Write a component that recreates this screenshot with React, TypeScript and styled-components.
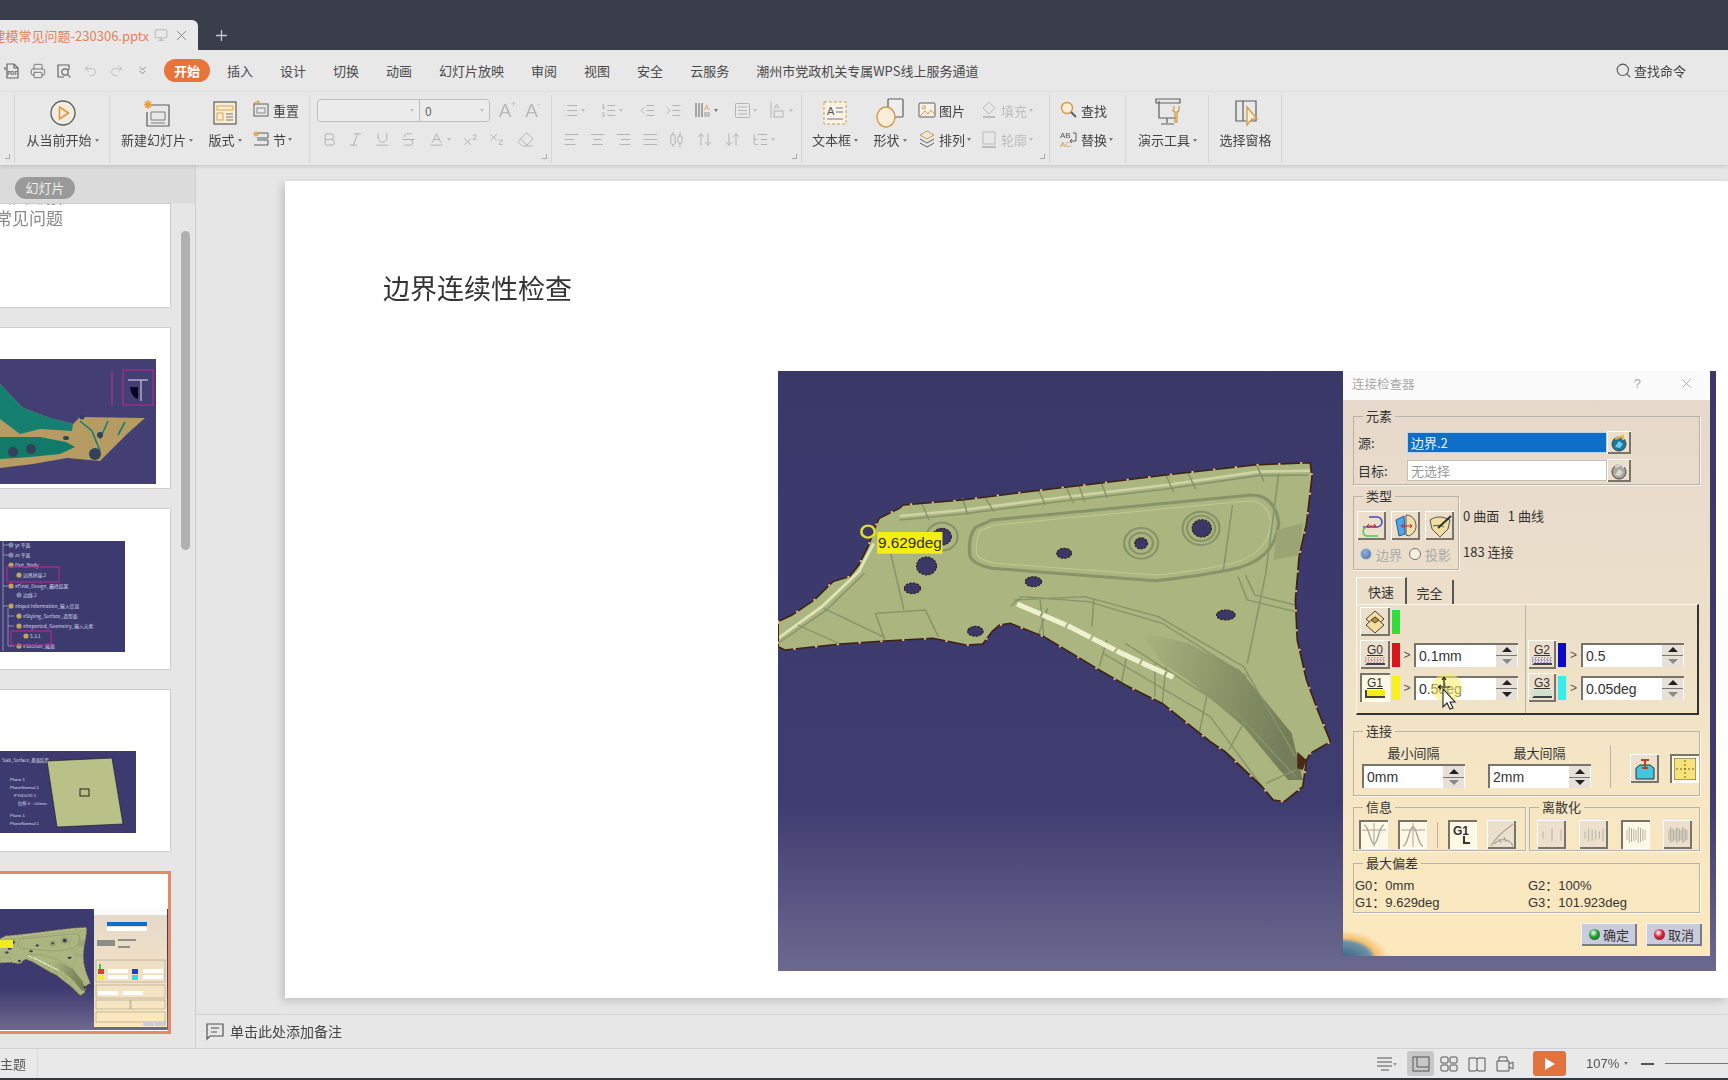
import React from 'react';
import styled, { createGlobalStyle } from 'styled-components';
import {
  Printer, Undo2, Redo2, Plus, X, Monitor, Bold, Italic, Underline, Strikethrough, Baseline,
  Superscript, Subscript, Eraser, List, ListOrdered, IndentDecrease, IndentIncrease, AlignLeft,
  AlignCenter, AlignRight, AlignJustify, AlignHorizontalDistributeCenter, ArrowUpDown,
  Search, ChevronsDown, ArrowDownUp, ListTree,
} from 'lucide-react';

const CJK = `"Noto Sans CJK SC", "Noto Sans", "Liberation Sans", sans-serif`;
const UIF = `"Liberation Sans", "Noto Sans CJK SC", sans-serif`;

const Global = createGlobalStyle`
  html, body { margin: 0; padding: 0; width: 1728px; height: 1080px; overflow: hidden; background: #e6e6e6; }
  * { box-sizing: border-box; }
`;

const Page = styled.div`
  width: 1728px; height: 1080px; display: flex; flex-direction: column; overflow: hidden;
  font-family: ${CJK}; color: #444; font-size: 13px; filter: blur(0.4px);
`;

/* ---------- title bar ---------- */
const TitleBar = styled.div`height: 50px; flex: none; background: #3a3e4b; display: flex; align-items: flex-end;`;
const DocTab = styled.div`
  width: 198px; height: 30px; background: #e9e9e9; border-radius: 0 6px 0 0; display: flex;
  align-items: center; justify-content: flex-end; gap: 5px; padding-right: 8px; overflow: hidden; flex: none;
  svg { flex: none; }
`;
const DocName = styled.span`color: #e2845a; font-size: 13px; white-space: nowrap; flex: none;`;
const NewTab = styled.div`margin-left: 15px; height: 30px; display: flex; align-items: center; color: #c8cad0;`;

/* ---------- menu ---------- */
const MenuBar = styled.div`
  height: 42px; flex: none; background: #e8e8e8; display: flex; align-items: center; border-bottom: 1px solid #e1e1e1;
`;
const QuickBar = styled.div`display: flex; margin-left: -1px;`;
const QuickBtn = styled.div<{ $dim?: boolean }>`
  width: 26px; height: 26px; display: flex; align-items: center; justify-content: center;
  color: ${p => (p.$dim ? '#b8b8b8' : '#666')};
`;
const MenuTabs = styled.div`display: flex; align-items: center; gap: 27px; margin-left: 9px;`;
const MenuItem = styled.span`font-size: 13px; color: #4a4a4a; white-space: nowrap;`;
const ActivePill = styled.span`
  width: 46px; height: 23px; border-radius: 12px; background: #e8743b; color: #fff; font-weight: 700;
  font-size: 13px; display: flex; align-items: center; justify-content: center; margin-right: -10px;
`;
const CommandSearch = styled.div`
  margin-left: auto; margin-right: 42px; display: flex; align-items: center; gap: 2px; font-size: 13px; color: #444;
`;

/* ---------- ribbon ---------- */
const Ribbon = styled.div`
  height: 73px; flex: none; background: #e8e8e8; display: flex; box-shadow: 0 2px 3px rgba(0,0,0,.10); position: relative; z-index: 2;
`;
const RibbonGroup = styled.div<{ $w: number; $launcher?: boolean }>`
  width: ${p => p.$w}px; flex: none; height: 68px; margin-top: 3px; display: flex; border-right: 1px solid #d6d6d6; position: relative;
  ${p => p.$launcher ? `&::after { content: ''; position: absolute; right: 4px; bottom: 4px; width: 4px; height: 4px; border-right: 1px solid #a8a8a8; border-bottom: 1px solid #a8a8a8; }` : ''}
`;
const BigBtn = styled.div<{ $w: number }>`
  width: ${p => p.$w}px; flex: none; display: flex; flex-direction: column; align-items: center; white-space: nowrap;
`;
const BigIcon = styled.div`height: 34px; margin-top: 1px; display: flex; align-items: center; justify-content: center;`;
const BigLabel = styled.div`height: 18px; line-height: 18px; margin-top: 1px; display: flex; align-items: center; gap: 3px; font-size: 13px; color: #444;`;
const Caret = styled.i<{ $dim?: boolean }>`
  display: inline-block; width: 0; height: 0; border-left: 2.5px solid transparent; border-right: 2.5px solid transparent;
  border-top: 3px solid ${p => (p.$dim ? '#c0c0c0' : '#777')}; flex: none;
`;
const SmallCol = styled.div<{ $ml?: number }>`
  display: flex; flex-direction: column; gap: 5px; padding-top: 3px; margin-left: ${p => p.$ml ?? 0}px;
`;
const SmallRow = styled.div<{ $dim?: boolean; $tight?: boolean }>`
  height: 24px; display: flex; align-items: center; gap: ${p => (p.$tight ? 0 : 2)}px; font-size: 13px; white-space: nowrap;
  color: ${p => (p.$dim ? '#bdbdbd' : '#444')};
`;
const FontBox = styled.div`
  width: 173px; height: 23px; border: 1px solid #bdbdbd; border-radius: 4px; display: flex; background: #ececec; margin: 1px 0 0 7px;
`;
const FontCell = styled.div<{ $w: number; $line?: boolean }>`
  width: ${p => p.$w}px; display: flex; align-items: center; justify-content: space-between; padding: 0 5px; font-size: 12px; color: #666;
  ${p => (p.$line ? 'border-right: 1px solid #bdbdbd;' : '')}
`;
const FmtBtn = styled.div<{ $w: number; $ml?: number }>`
  width: ${p => p.$w}px; height: 24px; flex: none; display: flex; align-items: center; justify-content: center; gap: 2px;
  color: #b2b2b2; margin-left: ${p => p.$ml ?? 0}px;
`;
const Glyph = styled.span`font-size: 19px; color: #b8b8b8; font-family: ${UIF}; position: relative; line-height: 1;
  sup { font-size: 9px; position: absolute; top: -1px; left: 12px; }
`;

/* ---------- main ---------- */
const Main = styled.div`flex: 1; display: flex; min-height: 0;`;
const SidePanel = styled.div`width: 196px; flex: none; display: flex; flex-direction: column; background: #e6e6e6; border-right: 1px solid #cfcfcf;`;
const PanelHead = styled.div`height: 38px; flex: none; background: #dbdbdb; display: flex; align-items: center; padding: 7px 0 0 15px; position: relative; z-index: 1;`;
const PanelPill = styled.span`
  width: 60px; height: 22px; border-radius: 11px; background: #9a9a9a; color: #eee; font-size: 13px;
  display: flex; align-items: center; justify-content: center;
`;
const PanelBody = styled.div`flex: 1; display: flex; min-height: 0; overflow: hidden;`;
const ThumbList = styled.div`width: 171px; flex: none; display: flex; flex-direction: column; gap: 19px;`;
const ThumbCard = styled.div<{ $h: number; $pt?: number; $on?: boolean }>`
  height: ${p => p.$h}px; flex: none; background: #fff; padding-top: ${p => p.$pt ?? 0}px; overflow: hidden;
  border: ${p => (p.$on ? '3px solid #e58a62' : '1px solid #cdcdcd')}; border-left: 0;
`;
const ThumbText = styled.div`
  font-size: 17px; color: #8a8a8a; line-height: 22px; white-space: nowrap; direction: rtl; width: 63px; margin-top: -19px;
`;
const ScrollTrack = styled.div`width: 24px; flex: none; padding: 28px 0 0 10px;`;
const ScrollThumb = styled.div`width: 9px; height: 319px; border-radius: 5px; background: #b0b0b0;`;

const Work = styled.div`flex: 1; min-width: 0; display: flex; flex-direction: column;`;
const Stage = styled.div`flex: 1; min-height: 0; padding: 16px 0 0 89px; overflow: hidden; background: #e6e6e6;`;
const Slide = styled.div`
  height: 817px; background: #fff; box-shadow: -3px 3px 8px rgba(0,0,0,.16); display: flex; flex-direction: column; align-items: flex-start;
`;
const SlideTitle = styled.h1`
  margin: 80px 0 56px 98px; height: 54px; line-height: 54px; font-size: 27px; font-weight: 400; color: #333; white-space: nowrap;
`;
const Viewport = styled.div`
  width: 938px; height: 600px; margin-left: 493px; flex: none; display: flex; align-items: flex-start;
  background: linear-gradient(#3a3769 0%, #3f3c70 72%, #6c6990 100%);
`;
const CadSvg = styled.svg`width: 565px; height: 600px; flex: none; display: block;`;

const Notes = styled.div`
  height: 34px; flex: none; border-top: 1px solid #d2d2d2; background: #e7e7e7; display: flex; align-items: center; gap: 5px; padding: 0 0 2px 9px; font-size: 14px; color: #444;
`;
const StatusBar = styled.div`
  height: 32px; flex: none; background: #e9e9e9; border-top: 1px solid #cfcfcf; border-bottom: 2px solid #2f3644; display: flex; align-items: center;
`;
const ThemeLabel = styled.span`width: 38px; height: 100%; border-right: 1px solid #dadada; font-size: 13px; color: #555; display: flex; align-items: center;`;
const StatusTools = styled.div`margin-left: auto; display: flex; align-items: center; height: 100%;`;
const StatusBtn = styled.div<{ $on?: boolean; $mr?: number }>`
  width: 27px; height: 25px; display: flex; align-items: center; justify-content: center; border-radius: 3px; margin-right: ${p => p.$mr ?? 1}px;
  background: ${p => (p.$on ? '#c8c8c8' : 'transparent')}; color: #666;
`;
const PlayBtn = styled.div`
  width: 33px; height: 25px; margin-left: 14px; border-radius: 3px; background: #e2733d; display: flex; align-items: center; justify-content: center;
`;
const Zoom = styled.span`margin-left: 20px; font-size: 13px; color: #555; display: flex; align-items: center; gap: 5px; width: 55px; font-family: ${UIF};`;
const ZoomMinus = styled.i`width: 13px; height: 2px; background: #555;`;
const ZoomLine = styled.i`width: 63px; height: 1px; background: #777; margin-left: 11px;`;

/* ---------- CATIA dialog ---------- */
const Dialog = styled.div`width: 367px; height: 585px; flex: none; display: flex; flex-direction: column; font-family: ${UIF}; color: #333;`;
const DialogHead = styled.div`
  height: 29px; flex: none; background: #fbfbfb; display: flex; align-items: center; padding: 0 16px 5px 9px; color: #a9a9a9; font-family: ${CJK}; font-size: 12.5px;
`;
const HeadHelp = styled.span`margin-left: auto; margin-right: 38px; font-family: ${UIF}; font-size: 13px;`;
const DialogBody = styled.div`
  flex: 1; position: relative; padding: 7px 10px 0; overflow: hidden;
  background: linear-gradient(#e6d9cb 0%, #ecdfca 40%, #f4e5c6 62%, #fbe8bd 100%);
`;
const Group = styled.fieldset<{ $w?: number; $pt?: number; $mt?: number }>`
  margin: ${p => p.$mt ?? 0}px 0 0; min-width: 0; padding: ${p => p.$pt ?? 6}px 0 0 0; border: 1px solid #b8b3a8; box-shadow: 1px 1px 0 rgba(255,255,255,.7);
  ${p => (p.$w ? `width: ${p.$w}px; flex: none;` : '')}
`;
const Legend = styled.legend`
  margin-left: 9px; padding: 0 3px; height: 18px; line-height: 18px; font-family: ${CJK}; font-size: 13px; color: #333;
`;
const FormRow = styled.div`display: grid; grid-template-columns: 49px 200px 24px; align-items: center; height: 23px; margin: 0 0 5px 4px;
  &:last-child { margin-bottom: 2px; }
`;
const FormLabel = styled.span`font-family: ${CJK}; font-size: 13px; color: #333;`;
const TextField = styled.div<{ $sel?: boolean }>`
  height: 21px; display: flex; align-items: center; padding-left: 3px; font-family: ${CJK}; font-size: 13px;
  background: ${p => (p.$sel ? '#0f6fc8' : '#fff')}; color: ${p => (p.$sel ? '#e8f2ff' : '#9a9a9a')};
  border: 1px solid ${p => (p.$sel ? '#bcd4ea' : '#c4c0b8')};
`;
const Bevel = styled.div<{ $w?: number; $h?: number; $on?: boolean }>`
  width: ${p => p.$w ?? 29}px; height: ${p => p.$h ?? 29}px; flex: none; display: flex; align-items: center; justify-content: center;
  background: ${p => (p.$on ? '#fff8e4' : '#ece0cc')};
  box-shadow: ${p => (p.$on
    ? 'inset 2px 2px 0 #77746c, inset -1px -1px 0 #fff'
    : 'inset 1px 1px 0 #fff, inset -2px -2px 0 #77746c')};
`;
const TypeBlock = styled.div`display: flex; margin-top: 2px; gap: 4px;`;
const TypeButtons = styled.div`display: flex; gap: 5px; padding-left: 3px;`;
const RadioRow = styled.div`display: flex; align-items: center; height: 16px; margin: 6px 0 7px 3px; gap: 4px; font-family: ${CJK}; font-size: 13px; color: #aaa;`;
const Radio = styled.i<{ $on?: boolean }>`
  width: 12px; height: 12px; border-radius: 50%; flex: none;
  background: ${p => (p.$on ? 'radial-gradient(circle at 40% 35%, #8fb0d8, #4d6d9c)' : '#f7efe2')};
  border: 1px solid ${p => (p.$on ? '#c5cdd8' : '#777')}; margin-left: 3px;
`;
const SideInfo = styled.div`display: flex; flex-direction: column; gap: 20px; padding-top: 21px; font-family: ${CJK}; font-size: 13px; line-height: 16px; color: #333; white-space: pre;`;
const Tabs = styled.div`display: flex; margin: 7px 0 0 3px; height: 27px; font-family: ${CJK}; font-size: 13px;`;
const TabHead = styled.div<{ $on?: boolean; $w: number }>`
  width: ${p => p.$w}px; display: flex; align-items: center; justify-content: center;
  border-right: 2px solid #555;
  ${p => (p.$on ? 'border-top: 1px solid #fff; border-left: 1px solid #fff; background: #ecdfca;' : 'margin-top: 3px;')}
`;
const TabPanel = styled.div`
  width: 343px; height: 111px; margin-left: 3px; display: grid; grid-template-columns: 169px 1fr;
  border-top: 1px solid #fbf5ea; border-left: 1px solid #fbf5ea; border-right: 2px solid #333; border-bottom: 2px solid #333;
`;
const TabCol = styled.div<{ $pl: number; $split?: boolean }>`
  display: flex; flex-direction: column; gap: 4px; padding: 2px 0 0 ${p => p.$pl}px;
  ${p => (p.$split ? 'border-right: 1px solid #b8b3a8;' : '')}
`;
const LevelRow = styled.div`display: flex; align-items: center; height: 29px;`;
const ColorBar = styled.i<{ $c: string }>`width: 8px; height: 24px; margin-left: 2px; background: ${p => p.$c}; flex: none;`;
const Gt = styled.span<{ $w: number }>`width: ${p => p.$w}px; text-align: center; font-size: 12px; color: #555; flex: none;`;
const Spin = styled.div<{ $w: number }>`
  width: ${p => p.$w}px; height: 24px; flex: none; display: flex; background: #fff; padding-left: 2px; align-items: center;
  border-left: 2px solid #77746c; border-top: 2px solid #77746c; font-size: 14px; color: #333; position: relative;
`;
const SpinText = styled.span`flex: 1; padding-left: 1px; white-space: nowrap;`;
const SpinBtns = styled.div`width: 21px; height: 22px; flex: none; display: flex; flex-direction: column; margin-right: 1px; gap: 1px; background: #777;`;
const SpinBtn = styled.div<{ $down?: boolean; $dim?: boolean }>`
  flex: 1; background: #e6e0d6; display: flex; align-items: center; justify-content: center;
  &::after { content: ''; width: 0; height: 0; border-left: 5px solid transparent; border-right: 5px solid transparent;
    ${p => (p.$down ? 'border-top' : 'border-bottom')}: 5px solid ${p => (p.$dim ? '#8a8a8a' : '#222')}; }
`;
const CursorSpot = styled.svg`position: absolute; left: 15px; top: -3px; width: 34px; height: 34px; overflow: visible;`;
const GBtnInner = styled.div`display: flex; flex-direction: column; align-items: center; font-size: 12px; line-height: 12px; width: 22px; color: #333;`;
const GText = styled.span`text-decoration: underline;`;
const GSwatch = styled.i<{ $bg: string; $edge?: boolean }>`
  width: 20px; height: 8px; margin-top: 1px; background: ${p => p.$bg}; border-bottom: 2px solid #444; border-left: 2px solid ${p => (p.$edge ? '#444' : 'transparent')};
`;
const ConnectRow = styled.div`display: flex; align-items: flex-end; padding: 0 0 7px 8px;`;
const StackedField = styled.div<{ $ml?: number }>`display: flex; flex-direction: column; align-items: center; gap: 3px; margin-left: ${p => p.$ml ?? 0}px;`;
const StackedLabel = styled.span`font-family: ${CJK}; font-size: 13px; line-height: 16px; color: #333;`;
const VLine = styled.i<{ $h: number; $mx: number }>`
  width: 1px; height: ${p => p.$h}px; background: #b8b3a8; margin: 0 ${p => p.$mx}px; flex: none;
`;
const ConnectTools = styled.div`display: flex; gap: 11px; padding-bottom: 5px;`;
const GroupsRow = styled.div`display: flex; gap: 3px; margin-top: 2px;`;
const ToolRow = styled.div<{ $pl: number; $gap: number }>`display: flex; align-items: center; gap: ${p => p.$gap}px; padding: 0 0 1px ${p => p.$pl}px;`;
const ReadGrid = styled.div`display: grid; grid-template-columns: 173px 1fr; padding: 0 0 1px 1px; font-size: 13px; line-height: 17px; color: #333;
  span { white-space: pre; font-family: ${UIF}, ${CJK}; }
`;
const DialogFoot = styled.div`display: flex; justify-content: flex-end; gap: 9px; margin: 10px -2px 0 0; position: relative; z-index: 1;`;
const FootBtn = styled.div`
  width: 56px; height: 23px; display: flex; align-items: center; justify-content: center; gap: 3px; background: #cacbdc;
  box-shadow: inset 1px 1px 0 #f4f4f8, inset -2px -2px 0 #7a7a8c; font-family: ${CJK}; font-size: 13px; color: #333;
`;
const Dot = styled.i<{ $c: string }>`width: 11px; height: 11px; border-radius: 50%; background: radial-gradient(circle at 40% 35%, #fff 0, ${p => p.$c} 45%, #333 130%);`;
const Globe = styled.div`
  position: absolute; left: 0; bottom: 0; width: 50px; height: 30px;
  background: radial-gradient(ellipse 46px 30px at 0 115%, #2f5a7c 0, #6d93a8 62%, #f3c070 74%, rgba(250,220,160,0) 100%);
`;

/* ---------- drawings ---------- */
const OUTLINE = '22,545 60,525 120,480 170,425 215,410 240,375 265,320 285,260 295,235 350,205 360,195 520,180 720,152 890,130 1070,105 1310,75 1460,68 1465,110 1450,250 1430,350 1420,480 1425,600 1450,720 1480,810 1515,905 1460,940 1450,960 1440,1040 1390,1085 1360,1080 1330,1040 1230,935 1190,905 1060,790 960,735 890,690 740,590 650,550 620,555 600,575 575,612 530,615 440,595 310,603 190,612 40,630 22,620';
const HOLE = '#3b3868';
const EDGE = '#87946a';

const Ribs = () => (
  <g stroke={EDGE} strokeWidth="4" fill="none">
    {[[410, 190, 430, 240], [520, 175, 535, 225], [580, 170, 605, 215], [725, 150, 745, 195], [800, 140, 820, 190], [835, 138, 850, 185], [895, 128, 912, 175], [1070, 105, 1090, 155], [1130, 98, 1150, 148], [1315, 75, 1335, 125]].map((l, i) => (
      <line key={i} x1={l[0]} y1={l[1]} x2={l[2]} y2={l[3]} />
    ))}
  </g>
);

const CadPart = ({ light = '#aab57f', tag = true }: { light?: string; tag?: boolean }) => (
  <g>
    <defs>
      <linearGradient id="shade" x1="0" y1="0" x2="1" y2="0.2">
        <stop offset="0" stopColor="#aab57f" />
        <stop offset="0.55" stopColor="#8b9568" />
        <stop offset="1" stopColor="#737d59" />
      </linearGradient>
    </defs>
    <polygon points={OUTLINE} fill={light} />
    <polygon points="1000,575 1130,610 1270,690 1410,880 1440,1020 1400,1020 1280,860 1130,720 1060,670" fill="url(#shade)" />
    {/* flange along the top edge */}
    <polyline points="350,228 520,210 730,180 1070,135 1320,95 1458,92" fill="none" stroke="#cfd4a6" strokeWidth="8" />
    <polyline points="350,240 520,222 730,192 1070,147 1320,107 1455,105" fill="none" stroke={EDGE} strokeWidth="5" />
    <polyline points="22,595 140,500 240,395 280,310" fill="none" stroke="#dfe3b8" strokeWidth="8" />
    <polyline points="22,610 150,512 255,400" fill="none" stroke={EDGE} strokeWidth="4" />
    <Ribs />
    {/* raised pocket */}
    <path d="M555,262 Q535,290 540,345 Q545,372 600,385 L1040,422 Q1120,415 1240,390 Q1365,365 1375,250 Q1365,165 1300,165 L600,240 Z" fill="none" stroke={EDGE} strokeWidth="9" />
    <path d="M570,270 Q555,295 558,340 Q565,360 610,370 L1040,405 Q1110,400 1230,375 Q1345,350 1355,250 Q1345,185 1295,182 L610,255 Z" fill="none" stroke="#c2c995" strokeWidth="3" />
    <path d="M1370,270 L1440,250 L1430,345 L1360,360 Z" fill="#9aa573" />
    <g stroke={EDGE} strokeWidth="4" fill="none">
      <polyline points="320,310 362,510" />
      <polyline points="145,505 310,592" />
      <polyline points="75,555 190,612" />
      <polyline points="285,520 420,510 455,590" />
      <polyline points="285,520 310,600" />
      <polyline points="1250,195 1225,392" />
      <polyline points="1375,100 1340,400 1290,670" />
      <polyline points="1265,410 1290,480 1420,515" />
      <polyline points="1285,405 1310,465 1420,495" />
      <polyline points="660,480 850,470 1050,530 1280,680 1420,950" />
      <polyline points="650,500 680,470 860,485 1060,550 1290,710" />
      <polyline points="730,480 740,590" />
      <polyline points="750,505 725,585" />
      <polyline points="875,480 870,560" />
      <polyline points="960,610 1270,830 1420,1010" />
      <polyline points="900,640 1190,830 1330,1040" />
      <polyline points="1040,670 1040,770" />
      <polyline points="1070,680 1060,790" />
      <polyline points="1180,770 1160,880" />
      <polyline points="1280,850 1240,930" />
      <polyline points="910,600 890,680" />
      <polyline points="965,640 950,730" />
      <polyline points="1340,1030 1420,990" />
    </g>
    <polyline points="668,492 810,560 950,640 1090,712" fill="none" stroke="#eef0d0" strokeWidth="15" strokeDasharray="70 6" />
    {/* bosses and holes */}
    <g fill="none" stroke={EDGE} strokeWidth="6">
      <circle cx="465" cy="290" r="42" />
      <circle cx="1165" cy="265" r="50" />
      <circle cx="1003" cy="310" r="46" />
      <circle cx="1003" cy="310" r="32" />
      <circle cx="1165" cy="265" r="38" />
    </g>
    <g fill={HOLE} stroke="#2b1a10" strokeWidth="3" strokeDasharray="7 3">
      <circle cx="465" cy="290" r="25" />
      <circle cx="1167" cy="265" r="26" />
      <circle cx="1003" cy="310" r="17" />
      <circle cx="423" cy="378" r="27" />
      <ellipse cx="795" cy="340" rx="20" ry="15" />
      <ellipse cx="712" cy="425" rx="22" ry="15" />
      <ellipse cx="385" cy="445" rx="22" ry="16" />
      <ellipse cx="555" cy="574" rx="21" ry="15" />
      <ellipse cx="1232" cy="525" rx="25" ry="15" />
    </g>
    <polygon points="1425,935 1450,960 1440,990 1425,985" fill="#4a2a14" />
    <polygon points={OUTLINE} fill="none" stroke="#3d2310" strokeWidth="4.5" strokeLinejoin="round" />
    <polygon points={OUTLINE} fill="none" stroke="#e8b68e" strokeWidth="6" strokeDasharray="1 58" strokeLinecap="round" />
    {tag && (
      <g>
        <circle cx="265" cy="275" r="18" fill="none" stroke="#e3dc2e" strokeWidth="7" />
        <rect x="290" y="276" width="176" height="65" fill="#f4ee16" />
        <text x="292" y="324" fontFamily={UIF} fontSize="43" fill="#333" textLength="172" lengthAdjust="spacingAndGlyphs">9.629deg</text>
      </g>
    )}
  </g>
);

const ThumbSvg = styled.svg<{ $w: number; $h: number }>`width: ${p => p.$w}px; height: ${p => p.$h}px; display: block; flex: none;`;

const ThumbTeal = () => (
  <ThumbSvg $w={156} $h={125} viewBox="0 0 156 125">
    <rect width="156" height="125" fill="#433f74" />
    <polygon points="0,25 23,49 50,59 73,65 80,58 145,59 127,75 100,102 67,99 33,105 0,109" fill="#b69c63" />
    <polygon points="0,25 23,49 50,59 73,65 72,72 40,70 20,75 0,60" fill="#157f70" />
    <polygon points="0,78 40,78 66,83 75,88 60,95 30,98 0,100" fill="#127a68" />
    <g stroke="#17806f" strokeWidth="1.6" fill="none"><polyline points="80,62 92,72 100,92" /><polyline points="108,62 100,80" /><polyline points="125,63 118,76" /></g>
    <g fill="#33415a"><circle cx="95" cy="95" r="6" /><circle cx="100" cy="76" r="3" /><circle cx="13" cy="93" r="5" /><circle cx="31" cy="90" r="5" /><ellipse cx="66" cy="79" rx="3" ry="2" /><circle cx="82" cy="58" r="2.5" /></g>
    <rect x="123" y="11" width="30" height="35" fill="none" stroke="#a02d86" strokeWidth="1.4" />
    <line x1="112" y1="12" x2="112" y2="47" stroke="#a02d86" strokeWidth="1.5" />
    <path d="M130,28 H138 V40 Q131,38 130,28 Z" fill="#060624" />
    <path d="M128,21 H148 M141,21 V42" stroke="#dfe3ef" strokeWidth="1" fill="none" />
  </ThumbSvg>
);

const TREE: [string, number, number][] = [
  ['yz 平面', 15, 6], ['zx 平面', 15, 16], ['Part_Body', 15, 26], ['边界拼接.2', 23, 36],
  ['#Final_Design_最终结果', 15, 47], ['边线.2', 23, 56], ['#Input Information_输入信息', 15, 67],
  ['#Styling_Surface_造型面', 23, 77], ['#Imported_Geometry_输入元素', 23, 87], ['5.3.1', 30, 97], ['#Section_截面', 23, 107],
];
const ThumbTree = () => (
  <ThumbSvg $w={125} $h={111} viewBox="0 0 125 111">
    <rect width="125" height="111" fill="#3d3a6f" />
    <path d="M3,0 V110 M3,4 H10 M3,14 H10 M3,45 H8 M3,65 H8 M8,67 V105 M8,75 H14 M8,85 H14 M8,105 H14" stroke="#c8cbe0" strokeWidth=".6" fill="none" />
    {TREE.map(([t, x, y]) => <text key={t} x={x} y={y} fontSize="4.8" fill="#d8dbec" fontFamily={CJK}>{t}</text>)}
    {TREE.map(([t, x, y]) => <circle key={`${t}d`} cx={x - 4} cy={y - 2} r="2.6" fill={y === 16 || y === 6 || y === 56 ? '#7f88a6' : '#c2a55c'} />)}
    <rect x="7" y="26" width="52" height="15" fill="none" stroke="#b02a8a" strokeWidth="1.2" />
    <rect x="11" y="90" width="40" height="14" fill="none" stroke="#b02a8a" strokeWidth="1.2" />
  </ThumbSvg>
);

const ThumbSlab = () => (
  <ThumbSvg $w={136} $h={82} viewBox="0 0 136 82">
    <rect width="136" height="82" fill="#3d3a6f" />
    {['Plane.1', 'PlaneNormal.1', 'FY0D070.1', 'Plane.1', 'PlaneNormal.1'].map((t, i) => (
      <text key={i} x={i === 2 ? 14 : 10} y={i < 3 ? 30 + i * 8 : 66 + (i - 3) * 8} fontSize="4.4" fill="#d8dbec" fontFamily={UIF}>{t}</text>
    ))}
    <text x="2" y="11" fontSize="4.4" fill="#d8dbec" fontFamily={CJK}>Slab_Surface_基面结果</text>
    <text x="18" y="54" fontSize="4.2" fill="#d8dbec" fontFamily={UIF}>拉伸.3 · r10mm</text>
    <polygon points="47,10 112,7 123,73 57,76" fill="#b9c188" stroke="#1d1d2c" strokeWidth=".7" />
    <rect x="80" y="38" width="9" height="7" fill="none" stroke="#222" strokeWidth="1" />
  </ThumbSvg>
);

const ThumbCurrent = () => (
  <ThumbSvg $w={168} $h={121} viewBox="0 0 168 121">
    <defs>
      <linearGradient id="tbg" x1="0" y1="0" x2="0" y2="1"><stop offset=".65" stopColor="#3d3a6f" /><stop offset="1" stopColor="#6c6990" /></linearGradient>
      <linearGradient id="dbg" x1="0" y1="0" x2="0" y2="1"><stop offset="0" stopColor="#e6d9cb" /><stop offset="1" stopColor="#fbe8bd" /></linearGradient>
    </defs>
    <rect width="168" height="121" fill="url(#tbg)" />
    <g transform="translate(-21.6,13.8) scale(.074,.0667)"><CadPart tag={false} /></g>
    <rect x="0" y="31" width="13" height="8" fill="#f0ea20" />
    <rect x="94" y="0" width="73" height="6" fill="#fbfbfb" />
    <rect x="94" y="6" width="73" height="112" fill="url(#dbg)" />
    <rect x="107" y="13" width="40" height="4" fill="#0f6fc8" />
    <rect x="107" y="18" width="40" height="4" fill="#fff" />
    <g fill="#8d8d88"><rect x="97" y="31" width="18" height="6" /><rect x="118" y="30" width="18" height="2" /><rect x="118" y="37" width="12" height="2" /></g>
    <g>
      <rect x="99" y="55" width="2" height="5" fill="#44c447" />
      <rect x="98" y="60" width="6" height="5" fill="#c43" /><rect x="108" y="60" width="20" height="4" fill="#fff" />
      <rect x="98" y="66" width="6" height="5" fill="#ee3" /><rect x="108" y="66" width="20" height="4" fill="#fff" />
      <rect x="132" y="60" width="6" height="5" fill="#33c" /><rect x="143" y="60" width="20" height="4" fill="#fff" />
      <rect x="132" y="66" width="6" height="5" fill="#3dd" /><rect x="143" y="66" width="20" height="4" fill="#fff" />
    </g>
    <g fill="none" stroke="#8f8b80" strokeWidth=".5">
      <rect x="96" y="51" width="69" height="22" /><rect x="96" y="76" width="69" height="13" /><rect x="96" y="91" width="34" height="9" /><rect x="131" y="91" width="34" height="9" /><rect x="96" y="103" width="69" height="10" />
    </g>
    <rect x="98" y="82" width="20" height="4" fill="#fff" /><rect x="123" y="82" width="20" height="4" fill="#fff" />
    <rect x="143" y="113" width="11" height="4" fill="#cacbdc" /><rect x="155" y="113" width="11" height="4" fill="#cacbdc" />
  </ThumbSvg>
);

const S = { stroke: '#666', fill: 'none', strokeWidth: 1.2 };
const IPdf = () => <svg width="18" height="18" viewBox="0 0 18 18" {...S}><path d="M4 2h7l4 4v10H4z" /><path d="M2 5v3M11 2v4h4" /><text x="4.5" y="12.5" fontSize="5" fill="#666" stroke="none" fontFamily={UIF} fontWeight="700">PDF</text></svg>;
const IPreview = () => <svg width="18" height="18" viewBox="0 0 18 18" {...S}><path d="M9 15H3V3h11v5" /><circle cx="10" cy="10" r="3.2" /><path d="M12.4 12.4l3 3" /></svg>;
const IPlay = () => <svg width="28" height="28" viewBox="0 0 28 28"><circle cx="14" cy="14" r="12" fill="#f1ecdf" stroke="#5e5e5e" strokeWidth="1.3" /><path d="M10.5 8l9 6-9 6z" fill="none" stroke="#e09a3e" strokeWidth="1.6" strokeLinejoin="round" /></svg>;
const INew = () => <svg width="30" height="30" viewBox="0 0 30 30"><path d="M9 7h18v21H5V14" fill="none" stroke="#5e5e5e" strokeWidth="1.2" /><path d="M9 14h14v8H9z" fill="none" stroke="#7d7d7d" /><path d="M9 25h14" stroke="#7d7d7d" /><path d="M6 2v9M2 6.5h8M3 3.5l6 6M9 3.5l-6 6" stroke="#eb9a35" strokeWidth="1.4" /></svg>;
const ILayout = () => <svg width="28" height="28" viewBox="0 0 28 28"><rect x="3" y="3" width="22" height="22" fill="#f8edd6" stroke="#5e5e5e" strokeWidth="1.2" /><rect x="6" y="7" width="16" height="4" fill="none" stroke="#d9a452" /><rect x="6" y="14" width="6" height="7" fill="none" stroke="#d9a452" /><path d="M15 15h7M15 18h7M15 21h7" stroke="#777" /></svg>;
const IReset = () => <svg width="20" height="20" viewBox="0 0 20 20"><rect x="3" y="4" width="14" height="12" fill="none" stroke="#5e5e5e" /><rect x="6" y="8" width="8" height="5" fill="none" stroke="#888" /><path d="M2 6a4 4 0 0 1 4-4h2M6 .5 8.5 2 6 3.5" fill="none" stroke="#e09a3e" /></svg>;
const ISection = () => <svg width="20" height="20" viewBox="0 0 20 20"><path d="M6 4h11v5H6M6 11h11v5H3" fill="none" stroke="#5e5e5e" /><path d="M5 2v6M2 5h6M3 3l4 4M7 3 3 7" stroke="#eb9a35" /></svg>;
const ITextBox = () => <svg width="28" height="28" viewBox="0 0 28 28"><rect x="3" y="3" width="22" height="22" fill="#f8f3e6" stroke="#d39a45" strokeDasharray="3 2" /><text x="6" y="16" fontSize="11" fontFamily={UIF} fill="#555">A</text><path d="M15 9h7M15 13h7M6 20h16" stroke="#777" /></svg>;
const IShape = () => <svg width="30" height="32" viewBox="0 0 30 32"><rect x="13" y="2" width="15" height="18" rx="1" fill="#eee" stroke="#5e5e5e" strokeWidth="1.2" /><ellipse cx="11" cy="20" rx="9" ry="10" fill="#f8eeda" stroke="#d39a45" strokeWidth="1.4" /></svg>;
const IPicture = () => <svg width="20" height="20" viewBox="0 0 20 20"><rect x="2" y="3" width="16" height="14" rx="1" fill="#f6f2e8" stroke="#5e5e5e" /><circle cx="7" cy="7.5" r="1.5" fill="none" stroke="#d39a45" /><path d="M3 16l5-5 3 3 3-4 4 5" fill="none" stroke="#d39a45" /></svg>;
const IArrange = () => <svg width="20" height="20" viewBox="0 0 20 20" fill="none"><path d="M10 2l7 4-7 4-7-4z" stroke="#d39a45" /><path d="M3 10l7 4 7-4M3 14l7 4 7-4" stroke="#5e5e5e" /></svg>;
const IFill = () => <svg width="20" height="20" viewBox="0 0 20 20" fill="none" stroke="#bcbcbc"><path d="M10 2l6 6-6 6-6-6z" /><path d="M4 17h12" strokeWidth="2" /></svg>;
const IOutline = () => <svg width="20" height="20" viewBox="0 0 20 20" fill="none" stroke="#bcbcbc"><rect x="4" y="3" width="12" height="12" /><path d="M3 18h14" strokeWidth="2" /></svg>;
const IFind = () => <svg width="20" height="20" viewBox="0 0 20 20" fill="none"><circle cx="8" cy="8" r="5.5" fill="#f8eeda" stroke="#d39a45" strokeWidth="1.4" /><path d="M12 12l5 5" stroke="#5e5e5e" strokeWidth="2" /></svg>;
const IReplace = () => <svg width="20" height="20" viewBox="0 0 20 20" fill="none"><text x="1" y="9" fontSize="8" fontFamily={UIF} fill="#555">AB</text><text x="1" y="18" fontSize="8" fontFamily={UIF} fill="#d39a45">AC</text><path d="M14 4h3v8h-6M13 10l-2 2 2 2" stroke="#5e5e5e" /></svg>;
const IPresent = () => <svg width="30" height="32" viewBox="0 0 30 32" fill="none"><path d="M6 4v17h17" stroke="#5e5e5e" strokeWidth="1.2" /><path d="M3 2h24v4H3zM14 21v5M8 27h13" stroke="#5e5e5e" strokeWidth="1.2" /><path d="M21 12v-3M26 9v3c0 2-1 3-2 3v10h-2V15c-1 0-2-1-2-3" stroke="#d39a45" strokeWidth="1.3" /></svg>;
const IPane = () => <svg width="30" height="32" viewBox="0 0 30 32" fill="none"><path d="M5 4h20v20H5zM12 4v20" stroke="#5e5e5e" strokeWidth="1.2" /><path d="M16 10l10 12h-5l-5 6z" fill="#f8eeda" stroke="#d39a45" strokeWidth="1.3" /></svg>;
const INotes = () => <svg width="20" height="20" viewBox="0 0 20 20" fill="none" stroke="#555" strokeWidth="1.2"><path d="M2 3h16v12H5l-3 3zM6 7h8M6 11h6" /></svg>;
const ITextDir = () => <svg width="18" height="18" viewBox="0 0 18 18" fill="none"><path d="M2 2v14M5 2v14M8 2v14" stroke="#777" strokeWidth="1.2" /><text x="10" y="9" fontSize="8" fontFamily={UIF} fill="#dba24c">A</text><path d="M11 11v5M13 11v5M15 11v5" stroke="#999" /></svg>;
const ITextAlign = () => <svg width="17" height="17" viewBox="0 0 17 17" fill="none" stroke="#b4b4b4"><rect x="1.5" y="1.5" width="14" height="14" rx="1" /><path d="M4 5h9M4 8.5h9M4 12h9" /></svg>;
const ISmartArt = () => <svg width="18" height="18" viewBox="0 0 18 18" fill="none"><path d="M2 1v16" stroke="#b4b4b4" /><text x="5" y="8" fontSize="8" fontFamily={UIF} fill="#b4b4b4">A</text><rect x="5" y="10" width="9" height="6" stroke="#b4b4b4" /></svg>;

const ISel = ({ dim }: { dim?: boolean }) => (
  <svg width="18" height="20" viewBox="0 0 18 20">
    <circle cx="9" cy="11" r="7" fill={dim ? '#a8a8a0' : '#167a9c'} stroke="#444" />
    <path d="M5 6l8-3v4" stroke={dim ? '#ddd' : '#e8b84a'} strokeWidth="2" fill="none" />
    <path d="M5 14l4-6 4 3-3 4z" fill={dim ? '#d8d8d0' : '#7ac5e8'} />
  </svg>
);
const ICurveLink = () => <svg width="26" height="26" viewBox="0 0 26 26" fill="none" strokeWidth="1.5"><path d="M10 4h8a5 5 0 0 1 0 10H4" stroke="#4545c8" /><path d="M7 14a5 5 0 0 0 0 9h12" stroke="#55c455" /><path d="M8 13h9M8 13l2-2M8 13l2 2M17 13l-2-2M17 13l-2 2" stroke="#c22" strokeWidth="1" /></svg>;
const ISurfLink = () => <svg width="26" height="26" viewBox="0 0 26 26" fill="none"><path d="M3 7l8-4 1 18-6 2z" fill="#4fa7e8" stroke="#2a55a0" /><path d="M13 2c7 0 10 6 10 11s-3 8-7 10l-3-1z" fill="#f0dda8" stroke="#555" /><path d="M8 13h11M8 13l2-2M8 13l2 2M19 13l-2-2M19 13l-2 2" stroke="#c22" /></svg>;
const IOverlap = () => <svg width="26" height="26" viewBox="0 0 26 26"><path d="M3 7c6-4 12-4 20 0l-2 9-8 8-8-8z" fill="#f1dfa0" stroke="#555" /><path d="M6 13c4-1 8-1 11 1" stroke="#555" fill="none" /><path d="M24 3 11 15" stroke="#333" strokeWidth="2" /></svg>;
const IDiamond = () => <svg width="24" height="26" viewBox="0 0 24 26" fill="none" stroke="#444"><path d="M12 2l9 8-9 8-9-8z" fill="#f6df9d" /><path d="M12 8l9 8-9 8-9-8z" fill="#f6df9d" /><path d="M8 11l4 3 4-3-4-3z" fill="#c78a3a" /></svg>;
const IAnvil = () => <svg width="24" height="24" viewBox="0 0 24 24"><path d="M3 22V11l4-3h10l4 3v11z" fill="#43c5dc" stroke="#333" /><path d="M8 3h8M12 3v8M9 11h6" stroke="#b04a2a" strokeWidth="2" fill="none" /></svg>;
const IGrid = () => <svg width="22" height="22" viewBox="0 0 22 22"><rect width="22" height="22" fill="#f8e27a" stroke="#555" /><path d="M11 2v18M2 11h18" stroke="#7a5a20" strokeDasharray="2 2" /></svg>;
const IWave = ({ up }: { up?: boolean }) => <svg width="26" height="26" viewBox="0 0 26 26" fill="none" stroke="#a6a69a"><path d="M1 8h24M13 1v24" /><path d={up ? 'M3 24C8 24 9 5 13 5s5 19 10 19' : 'M3 3c5 0 6 19 10 19s5-19 10-19'} strokeWidth="1.4" /></svg>;
const ICurl = () => <svg width="26" height="26" viewBox="0 0 26 26" fill="none" stroke="#a6a69a" strokeWidth="1.2"><path d="M2 24C8 14 14 10 24 2M5 22C12 16 20 16 24 24M10 17l2 4M15 15l2 5" /></svg>;
const IBars = ({ n }: { n: number }) => (
  <svg width="24" height="22" viewBox="0 0 24 22" stroke="#b5b3a6">
    {Array.from({ length: n }).map((_, i) => {
      const x = 3 + (i * 18) / Math.max(n - 1, 1);
      const h = 7 + ((i * 7) % 4) * 2 + (n > 7 ? 3 : 0);
      return <line key={i} x1={x} x2={x} y1={11 - h / 2} y2={11 + h / 2} />;
    })}
  </svg>
);

const SpinBox = ({ w, text, dimDown, children }: { w: number; text: string; dimDown?: boolean; children?: React.ReactNode }) => (
  <Spin $w={w}>
    <SpinText>{text}</SpinText>
    {children}
    <SpinBtns><SpinBtn /><SpinBtn $down $dim={dimDown} /></SpinBtns>
  </Spin>
);
const GBtn = ({ label, swatch, on }: { label: string; swatch: string; on?: boolean }) => (
  <Bevel $w={label === 'G2' || label === 'G3' ? 28 : 30} $on={on}>
    <GBtnInner><GText>{label}</GText><GSwatch $bg={swatch} $edge={on} /></GBtnInner>
  </Bevel>
);
const HATCH_RED = 'repeating-conic-gradient(#c9a8a0 0 25%, #efe4d6 0 50%) 0 0/3px 3px';
const HATCH_BLUE = 'repeating-conic-gradient(#a9a0c8 0 25%, #efe4d6 0 50%) 0 0/3px 3px';

const CatiaDialog = () => (
  <Dialog>
    <DialogHead>连接检查器<HeadHelp>?</HeadHelp><X size={15} strokeWidth={1.3} color="#999" /></DialogHead>
    <DialogBody>
      <Group>
        <Legend>元素</Legend>
        <FormRow><FormLabel>源:</FormLabel><TextField $sel>边界.2</TextField><Bevel $w={24} $h={23}><ISel /></Bevel></FormRow>
        <FormRow><FormLabel>目标:</FormLabel><TextField>无选择</TextField><Bevel $w={24} $h={23}><ISel dim /></Bevel></FormRow>
      </Group>
      <TypeBlock>
        <Group $w={106}>
          <Legend>类型</Legend>
          <TypeButtons>
            <Bevel><ICurveLink /></Bevel><Bevel><ISurfLink /></Bevel><Bevel><IOverlap /></Bevel>
          </TypeButtons>
          <RadioRow><Radio $on />边界<Radio />投影</RadioRow>
        </Group>
        <SideInfo><span>0 曲面   1 曲线</span><span>183 连接</span></SideInfo>
      </TypeBlock>
      <Tabs><TabHead $on $w={51}>快速</TabHead><TabHead $w={47}>完全</TabHead></Tabs>
      <TabPanel>
        <TabCol $pl={3} $split>
          <LevelRow><Bevel $w={30}><IDiamond /></Bevel><ColorBar $c="#35dd3a" /></LevelRow>
          <LevelRow><GBtn label="G0" swatch={HATCH_RED} /><ColorBar $c="#d8161c" /><Gt $w={14}>&gt;</Gt><SpinBox w={104} text="0.1mm" dimDown /></LevelRow>
          <LevelRow>
            <GBtn label="G1" swatch="#f3ee1a" on /><ColorBar $c="#f7f21e" /><Gt $w={14}>&gt;</Gt>
            <SpinBox w={104} text="0.5deg">
              <CursorSpot viewBox="0 0 34 34">
                <circle cx="16" cy="13" r="15" fill="#f5ee70" opacity=".6" />
                <path d="M12 14 L12 32 L16 28 L19 34 L22 33 L19 27 L24 27 Z" fill="#fff" stroke="#222" strokeWidth="1.1" />
                <path d="M7 12h12M7 12l3-2M7 12l3 2M13 2v9M13 2l-2 3M13 2l2 3" stroke="#222" strokeWidth="1.2" fill="none" />
              </CursorSpot>
            </SpinBox>
          </LevelRow>
        </TabCol>
        <TabCol $pl={2}>
          <LevelRow />
          <LevelRow><GBtn label="G2" swatch={HATCH_BLUE} /><ColorBar $c="#0a0ac8" /><Gt $w={15}>&gt;</Gt><SpinBox w={103} text="0.5" dimDown /></LevelRow>
          <LevelRow><GBtn label="G3" swatch="#cfe0cf" /><ColorBar $c="#36ecec" /><Gt $w={15}>&gt;</Gt><SpinBox w={103} text="0.05deg" dimDown /></LevelRow>
        </TabCol>
      </TabPanel>
      <Group $mt={7} $pt={5}>
        <Legend>连接</Legend>
        <ConnectRow>
          <StackedField><StackedLabel>最小间隔</StackedLabel><SpinBox w={103} text="0mm" dimDown /></StackedField>
          <StackedField $ml={23}><StackedLabel>最大间隔</StackedLabel><SpinBox w={103} text="2mm" /></StackedField>
          <VLine $h={43} $mx={19} />
          <ConnectTools>
            <Bevel><IAnvil /></Bevel>
            <Bevel $on><IGrid /></Bevel>
          </ConnectTools>
        </ConnectRow>
      </Group>
      <GroupsRow>
        <Group $w={173} $pt={4}>
          <Legend>信息</Legend>
          <ToolRow $pl={5} $gap={10}>
            <Bevel $on><IWave /></Bevel><Bevel $on><IWave up /></Bevel>
            <VLine $h={26} $mx={0} />
            <Bevel $on><svg width="26" height="26" viewBox="0 0 26 26"><text x="3" y="13" fontSize="12" fontWeight="700" fontFamily={UIF} fill="#333">G1</text><path d="M14 14v7h6" stroke="#333" strokeWidth="2" fill="none" /></svg></Bevel>
            <Bevel><ICurl /></Bevel>
          </ToolRow>
        </Group>
        <Group $w={171} $pt={4}>
          <Legend>离散化</Legend>
          <ToolRow $pl={7} $gap={13}>
            <Bevel><IBars n={3} /></Bevel><Bevel><IBars n={6} /></Bevel><Bevel $on><IBars n={9} /></Bevel><Bevel><IBars n={13} /></Bevel>
          </ToolRow>
        </Group>
      </GroupsRow>
      <Group $pt={5} $mt={3}>
        <Legend>最大偏差</Legend>
        <ReadGrid>
          <span>G0：0mm</span><span>G2：100%</span>
          <span>G1：9.629deg</span><span>G3：101.923deg</span>
        </ReadGrid>
      </Group>
      <DialogFoot>
        <FootBtn><Dot $c="#18a030" />确定</FootBtn>
        <FootBtn><Dot $c="#d0203a" />取消</FootBtn>
      </DialogFoot>
      <Globe />
    </DialogBody>
  </Dialog>
);

const MENU = ['插入', '设计', '切换', '动画', '幻灯片放映', '审阅', '视图', '安全', '云服务', '潮州市党政机关专属WPS线上服务通道'];
const I = { size: 17, strokeWidth: 1.4 };

export default function App() {
  return (
    <Page>
      <Global />
      <TitleBar>
        <DocTab>
          <DocName>建模常见问题-230306.pptx</DocName>
          <Monitor size={14} strokeWidth={1.3} color="#a8a8a8" />
          <X size={17} strokeWidth={1.4} color="#8a8a8a" />
        </DocTab>
        <NewTab><Plus size={17} strokeWidth={1.8} /></NewTab>
      </TitleBar>

      <MenuBar>
        <QuickBar>
          <QuickBtn><IPdf /></QuickBtn>
          <QuickBtn><Printer size={16} strokeWidth={1.3} /></QuickBtn>
          <QuickBtn><IPreview /></QuickBtn>
          <QuickBtn $dim><Undo2 size={15} strokeWidth={1.3} /></QuickBtn>
          <QuickBtn $dim><Redo2 size={15} strokeWidth={1.3} /></QuickBtn>
          <QuickBtn><ChevronsDown size={13} strokeWidth={1.3} /></QuickBtn>
        </QuickBar>
        <MenuTabs>
          <ActivePill>开始</ActivePill>
          {MENU.map(m => <MenuItem key={m}>{m}</MenuItem>)}
        </MenuTabs>
        <CommandSearch><Search size={17} strokeWidth={1.5} color="#555" />查找命令</CommandSearch>
      </MenuBar>

      <Ribbon>
        <RibbonGroup $w={15} $launcher />
        <RibbonGroup $w={95}>
          <BigBtn $w={95}><BigIcon><IPlay /></BigIcon><BigLabel>从当前开始<Caret /></BigLabel></BigBtn>
        </RibbonGroup>
        <RibbonGroup $w={200}>
          <BigBtn $w={94}><BigIcon><INew /></BigIcon><BigLabel>新建幻灯片<Caret /></BigLabel></BigBtn>
          <BigBtn $w={42}><BigIcon><ILayout /></BigIcon><BigLabel>版式<Caret /></BigLabel></BigBtn>
          <SmallCol $ml={5}>
            <SmallRow><IReset />重置</SmallRow>
            <SmallRow><ISection />节<Caret /></SmallRow>
          </SmallCol>
        </RibbonGroup>
        <RibbonGroup $w={242} $launcher>
          <SmallCol>
            <SmallRow $tight>
              <FontBox>
                <FontCell $w={102} $line><span /><Caret $dim /></FontCell>
                <FontCell $w={69}>0<Caret $dim /></FontCell>
              </FontBox>
              <FmtBtn $w={26} $ml={2}><Glyph>A<sup>+</sup></Glyph></FmtBtn>
              <FmtBtn $w={27}><Glyph>A<sup>-</sup></Glyph></FmtBtn>
            </SmallRow>
            <SmallRow $tight>
              <FmtBtn $w={26} $ml={6}><Bold {...I} /></FmtBtn>
              <FmtBtn $w={27}><Italic {...I} /></FmtBtn>
              <FmtBtn $w={26}><Underline {...I} /></FmtBtn>
              <FmtBtn $w={27}><Strikethrough {...I} /></FmtBtn>
              <FmtBtn $w={35}><Baseline {...I} /><Caret $dim /></FmtBtn>
              <FmtBtn $w={26}><Superscript {...I} /></FmtBtn>
              <FmtBtn $w={26}><Subscript {...I} /></FmtBtn>
              <FmtBtn $w={32}><Eraser {...I} /></FmtBtn>
            </SmallRow>
          </SmallCol>
        </RibbonGroup>
        <RibbonGroup $w={250} $launcher>
          <SmallCol $ml={6}>
            <SmallRow $tight>
              <FmtBtn $w={30}><List {...I} /><Caret $dim /></FmtBtn>
              <FmtBtn $w={38} $ml={4}><ListOrdered {...I} /><Caret $dim /></FmtBtn>
              <FmtBtn $w={26} $ml={4}><IndentDecrease {...I} /></FmtBtn>
              <FmtBtn $w={26}><IndentIncrease {...I} /></FmtBtn>
              <FmtBtn $w={36} $ml={2}><ITextDir /><Caret /></FmtBtn>
              <FmtBtn $w={38} $ml={2}><ITextAlign /><Caret $dim /></FmtBtn>
              <FmtBtn $w={34}><ISmartArt /><Caret $dim /></FmtBtn>
            </SmallRow>
            <SmallRow $tight>
              <FmtBtn $w={26}><AlignLeft {...I} /></FmtBtn>
              <FmtBtn $w={26}><AlignCenter {...I} /></FmtBtn>
              <FmtBtn $w={27}><AlignRight {...I} /></FmtBtn>
              <FmtBtn $w={26}><AlignJustify {...I} /></FmtBtn>
              <FmtBtn $w={27}><AlignHorizontalDistributeCenter {...I} /></FmtBtn>
              <FmtBtn $w={28}><ArrowUpDown {...I} /></FmtBtn>
              <FmtBtn $w={28}><ArrowDownUp {...I} /></FmtBtn>
              <FmtBtn $w={34}><ListTree {...I} /><Caret $dim /></FmtBtn>
            </SmallRow>
          </SmallCol>
        </RibbonGroup>
        <RibbonGroup $w={248} $launcher>
          <BigBtn $w={66}><BigIcon><ITextBox /></BigIcon><BigLabel>文本框<Caret /></BigLabel></BigBtn>
          <BigBtn $w={44}><BigIcon><IShape /></BigIcon><BigLabel>形状<Caret /></BigLabel></BigBtn>
          <SmallCol $ml={5}>
            <SmallRow><IPicture />图片</SmallRow>
            <SmallRow><IArrange />排列<Caret /></SmallRow>
          </SmallCol>
          <SmallCol $ml={8}>
            <SmallRow $dim><IFill />填充<Caret $dim /></SmallRow>
            <SmallRow $dim><IOutline />轮廓<Caret $dim /></SmallRow>
          </SmallCol>
        </RibbonGroup>
        <RibbonGroup $w={76}>
          <SmallCol $ml={9}>
            <SmallRow><IFind />查找</SmallRow>
            <SmallRow><IReplace />替换<Caret /></SmallRow>
          </SmallCol>
        </RibbonGroup>
        <RibbonGroup $w={83}>
          <BigBtn $w={83}><BigIcon><IPresent /></BigIcon><BigLabel>演示工具<Caret /></BigLabel></BigBtn>
        </RibbonGroup>
        <RibbonGroup $w={73}>
          <BigBtn $w={73}><BigIcon><IPane /></BigIcon><BigLabel>选择窗格</BigLabel></BigBtn>
        </RibbonGroup>
      </Ribbon>

      <Main>
        <SidePanel>
          <PanelHead><PanelPill>幻灯片</PanelPill></PanelHead>
          <PanelBody>
            <ThumbList>
              <ThumbCard $h={105}><ThumbText>曲面连接<br />常见问题</ThumbText></ThumbCard>
              <ThumbCard $h={162} $pt={31}><ThumbTeal /></ThumbCard>
              <ThumbCard $h={162} $pt={32}><ThumbTree /></ThumbCard>
              <ThumbCard $h={163} $pt={61}><ThumbSlab /></ThumbCard>
              <ThumbCard $h={163} $pt={35} $on><ThumbCurrent /></ThumbCard>
            </ThumbList>
            <ScrollTrack><ScrollThumb /></ScrollTrack>
          </PanelBody>
        </SidePanel>

        <Work>
          <Stage>
            <Slide>
              <SlideTitle>边界连续性检查</SlideTitle>
              <Viewport>
                <CadSvg viewBox="0 0 565 600">
                  <g transform="translate(-8,69) scale(.37,.3333)"><CadPart /></g>
                </CadSvg>
                <CatiaDialog />
              </Viewport>
            </Slide>
          </Stage>
          <Notes><INotes />单击此处添加备注</Notes>
        </Work>
      </Main>

      <StatusBar>
        <ThemeLabel>主题</ThemeLabel>
        <StatusTools>
          <StatusBtn $mr={7}><svg width="24" height="16" viewBox="0 0 24 16" stroke="#555" fill="none"><path d="M2 2h15M2 6h15M2 10h15M6 14h8" /><path d="M18 7h4l-2 3z" fill="#999" stroke="none" /></svg></StatusBtn>
          <StatusBtn $on><svg width="18" height="16" viewBox="0 0 18 16" stroke="#555" fill="none"><rect x="1" y="1" width="16" height="14" /><path d="M5 1v10h12" /></svg></StatusBtn>
          <StatusBtn><svg width="18" height="16" viewBox="0 0 18 16" stroke="#555" fill="none"><rect x="1" y="1" width="7" height="6" rx="1" /><rect x="10" y="1" width="7" height="6" rx="1" /><rect x="1" y="9" width="7" height="6" rx="1" /><rect x="10" y="9" width="7" height="6" rx="1" /></svg></StatusBtn>
          <StatusBtn><svg width="18" height="16" viewBox="0 0 18 16" stroke="#555" fill="none"><path d="M1 2h7l1 1 1-1h7v13h-7l-1-1-1 1H1zM9 3v11" /></svg></StatusBtn>
          <StatusBtn><svg width="20" height="18" viewBox="0 0 20 18" stroke="#555" fill="none"><path d="M2 6h12v10H2zM4 6V2h8v4M14 9l4-2v7l-4-2" /></svg></StatusBtn>
          <PlayBtn><svg width="12" height="14" viewBox="0 0 12 14"><path d="M1 1l10 6-10 6z" fill="#fff" /></svg></PlayBtn>
          <Zoom>107%<Caret /></Zoom>
          <ZoomMinus />
          <ZoomLine />
        </StatusTools>
      </StatusBar>
    </Page>
  );
}
